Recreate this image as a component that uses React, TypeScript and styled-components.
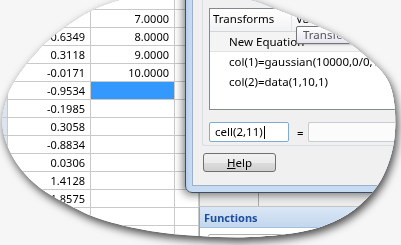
import { Fragment } from 'react'
import styled, { createGlobalStyle } from 'styled-components'

const GlobalStyle = createGlobalStyle`
  html, body {
    margin: 0;
    padding: 0;
    background: #f6f6f6;
  }
  body {
    width: 401px;
    height: 245px;
    overflow: hidden;
    font-family: "Noto Sans", "Open Sans", sans-serif;
  }
  * { box-sizing: border-box; }
`

// outline of the magnifier lens, clockwise from the left
const lensPoints: [number, number][] = [
  [2, 122], [6, 100], [14, 82], [30, 60], [55, 35], [95, 9], [140, -4], [200, -8],
  [250, 0], [280, 11], [310, 23], [343, 39], [373, 63], [389, 83], [395, 112],
  [393, 147], [381, 180], [360, 205], [333, 222], [300, 232], [250, 237], [200, 236],
  [150, 231], [100, 219], [67, 204], [40, 188], [20, 168], [7, 145],
]

// closed catmull-rom curve through the points
function smoothPath(pts: [number, number][]) {
  const n = pts.length
  let d = `M ${pts[0][0]} ${pts[0][1]}`
  for (let i = 0; i < n; i++) {
    const p0 = pts[(i - 1 + n) % n]
    const p1 = pts[i]
    const p2 = pts[(i + 1) % n]
    const p3 = pts[(i + 2) % n]
    const c1x = p1[0] + (p2[0] - p0[0]) / 6
    const c1y = p1[1] + (p2[1] - p0[1]) / 6
    const c2x = p2[0] - (p3[0] - p1[0]) / 6
    const c2y = p2[1] - (p3[1] - p1[1]) / 6
    d += ` C ${c1x.toFixed(1)} ${c1y.toFixed(1)} ${c2x.toFixed(1)} ${c2y.toFixed(1)} ${p2[0]} ${p2[1]}`
  }
  return d + ' Z'
}

const LENS_PATH = smoothPath(lensPoints)

// sheet data: [col A, col B], null in col B = selected cell
const rows: [string, string | null][] = [
  ['', ''],
  ['', '7.0000'],
  ['0.6349', '8.0000'],
  ['0.3118', '9.0000'],
  ['-0.0171', '10.0000'],
  ['-0.9534', null],
  ['-0.1985', ''],
  ['0.3058', ''],
  ['-0.8834', ''],
  ['0.0306', ''],
  ['1.4128', ''],
  ['1.8575', ''],
  ['', ''],
  ['', ''],
]

const Stage = styled.div`
  width: 401px;
  height: 245px;
  overflow: hidden;
  background: #f6f6f6;
`

const Lens = styled.div`
  width: 401px;
  height: 245px;
  filter: drop-shadow(0 0 0.6px rgba(0, 0, 0, 0.35)) drop-shadow(2px 4px 4px rgba(0, 0, 0, 0.7));
`

const Screen = styled.div`
  position: relative;
  width: 401px;
  height: 245px;
  clip-path: path('${LENS_PATH}');
  display: flex;
  overflow: hidden;
  background: #fff;
  font-size: 11px;
  color: #000;
`

const Sheet = styled.div`
  width: 199px;
  flex: none;
  margin-top: -8px;
  display: grid;
  grid-template-columns: 8px 83px 84px 24px;
  grid-auto-rows: 18px;
  align-content: start;
`

const Cell = styled.div<{ $head?: boolean; $selected?: boolean }>`
  border-right: 1px solid #c9c9c9;
  border-bottom: 1px solid #c9c9c9;
  background: ${(p) => (p.$selected ? '#3399ff' : p.$head ? '#dbe5f2' : '#fff')};
  text-align: right;
  padding-right: 5px;
  line-height: 17px;
  white-space: nowrap;
`

const Dock = styled.div`
  flex: 1;
  display: flex;
  flex-direction: column;
  background: #ececec;
`

const Strip = styled.div`
  height: 207px;
  flex: none;
  display: flex;
  border-left: 1px solid #b5b5b5;
  border-bottom: 1px solid #c4c4c4;
`

const StripCell = styled.div`
  width: 59px;
  border-right: 1px solid #a9a9a9;
`

const Panel = styled.div`
  flex: 1;
  border-left: 1px solid #8fa3ba;
  background: #fff;
`

const PanelTitle = styled.div`
  height: 21px;
  padding-left: 4px;
  line-height: 21px;
  font-weight: 700;
  color: #1d4d9e;
  background: linear-gradient(#dae7f6, #c3d7ee);
  border-bottom: 1px solid #a9c0dc;
`

const PanelItem = styled.div`
  margin: 6px 0 0 8px;
  height: 16px;
  border: 1px solid #b0b0b0;
  border-radius: 2px;
  background: #fafafa;
`

const Dialog = styled.div`
  position: absolute;
  left: 185px;
  top: -60px;
  width: 260px;
  height: 253px;
  border: 1px solid #3d4d61;
  border-radius: 0 0 0 7px;
  background: linear-gradient(90deg, #b7cfea, #c6daf1 4px);
  padding: 0 0 6px 6px;
  box-shadow: -2px 2px 9px rgba(0, 0, 0, 0.5);
  font-size: 11.5px;
`

const DialogBody = styled.div`
  height: 100%;
  border: 1px solid #9cb1c9;
  border-right: none;
  border-top: none;
  background: #f0f0f0;
  display: flex;
  flex-direction: column;
  justify-content: flex-end;
  padding: 0 0 13px 9px;
`

const GroupBox = styled.div`
  display: flex;
  flex-direction: column;
  justify-content: flex-end;
  border: 1px solid #d5dfe5;
  border-right: none;
  border-radius: 3px 0 0 3px;
  padding: 0 0 3px 6px;
  height: 220px;
`

const ListView = styled.div`
  height: 102px;
  margin-bottom: 12px;
  border: 1px solid #828790;
  border-right: none;
  background: #fff;
  overflow: hidden;
`

const HeaderRow = styled.div`
  display: flex;
  height: 23px;
  border-bottom: 1px solid #d5d5d5;
  background: linear-gradient(#ffffff, #f1f2f4);
  line-height: 20px;
`

const HeaderCell = styled.div<{ $width?: number }>`
  width: ${(p) => (p.$width ? `${p.$width}px` : 'auto')};
  flex: ${(p) => (p.$width ? 'none' : '1')};
  padding-left: ${(p) => (p.$width ? 3 : 4)}px;
  border-right: 1px solid #e3e5e8;
`

const ItemRow = styled.div<{ $new?: boolean }>`
  height: 20px;
  padding-left: 19px;
  line-height: 20px;
  white-space: nowrap;
  background: ${(p) => (p.$new ? '#f4f4f4' : '#fff')};
  border-bottom: 1px solid ${(p) => (p.$new ? '#e2e2e2' : 'transparent')};
`

const TextRow = styled.div`
  display: flex;
  align-items: center;
  height: 20px;
`

const TextBox = styled.div<{ $focus?: boolean }>`
  height: 20px;
  width: ${(p) => (p.$focus ? '80px' : 'auto')};
  flex: ${(p) => (p.$focus ? 'none' : '1')};
  border: 1px solid ${(p) => (p.$focus ? '#7faad6' : '#c6ccd3')};
  border-right: ${(p) => (p.$focus ? undefined : 'none')};
  border-radius: 2px;
  background: ${(p) => (p.$focus ? '#fff' : '#fbfbfb')};
  padding-left: 5px;
  line-height: 18px;
  display: flex;
  align-items: center;
`

const Caret = styled.span`
  display: inline-block;
  width: 1px;
  height: 13px;
  margin-left: 1px;
  background: #000;
`

const Equals = styled.span`
  margin: 0 4px 0 8px;
`

const Button = styled.button`
  width: 73px;
  height: 19px;
  margin: 7px 0 0 1px;
  padding: 0;
  border: 1px solid #707070;
  border-radius: 3px;
  background: linear-gradient(#f2f2f2 0%, #ebebeb 50%, #dddddd 51%, #cfcfcf 100%);
  font: inherit;
  color: #000;
  line-height: 16px;
  flex: none;
  u { text-decoration: underline; }
`

const Tooltip = styled.div`
  position: absolute;
  left: 296px;
  top: 26px;
  height: 18px;
  padding: 0 6px;
  border: 1px solid #767676;
  border-radius: 2px;
  background: linear-gradient(#ffffff, #e4e5f0);
  color: #575757;
  font-size: 11.5px;
  line-height: 16px;
  white-space: nowrap;
  box-shadow: 1px 1px 2px rgba(0, 0, 0, 0.2);
`

export default function App() {
  return (
    <>
      <GlobalStyle />
      <Stage>
        <Lens>
          <Screen>
            <Sheet>
              {rows.map(([a, b], i) => (
                <Fragment key={i}>
                  <Cell $head />
                  <Cell>{a}</Cell>
                  <Cell $selected={b === null}>{b}</Cell>
                  <Cell />
                </Fragment>
              ))}
            </Sheet>
            <Dock>
              <Strip>
                <StripCell />
              </Strip>
              <Panel>
                <PanelTitle>Functions</PanelTitle>
                <PanelItem />
              </Panel>
            </Dock>
            <Dialog>
              <DialogBody>
                <GroupBox>
                  <ListView>
                    <HeaderRow>
                      <HeaderCell $width={82}>Transforms</HeaderCell>
                      <HeaderCell>Value</HeaderCell>
                    </HeaderRow>
                    <ItemRow $new>New Equation</ItemRow>
                    <ItemRow>col(1)=gaussian(10000,0/0,1)</ItemRow>
                    <ItemRow>col(2)=data(1,10,1)</ItemRow>
                  </ListView>
                  <TextRow>
                    <TextBox $focus>
                      cell(2,11)
                      <Caret />
                    </TextBox>
                    <Equals>=</Equals>
                    <TextBox />
                  </TextRow>
                </GroupBox>
                <Button>
                  <u>H</u>elp
                </Button>
              </DialogBody>
            </Dialog>
            <Tooltip>Transforms</Tooltip>
          </Screen>
        </Lens>
      </Stage>
    </>
  )
}
